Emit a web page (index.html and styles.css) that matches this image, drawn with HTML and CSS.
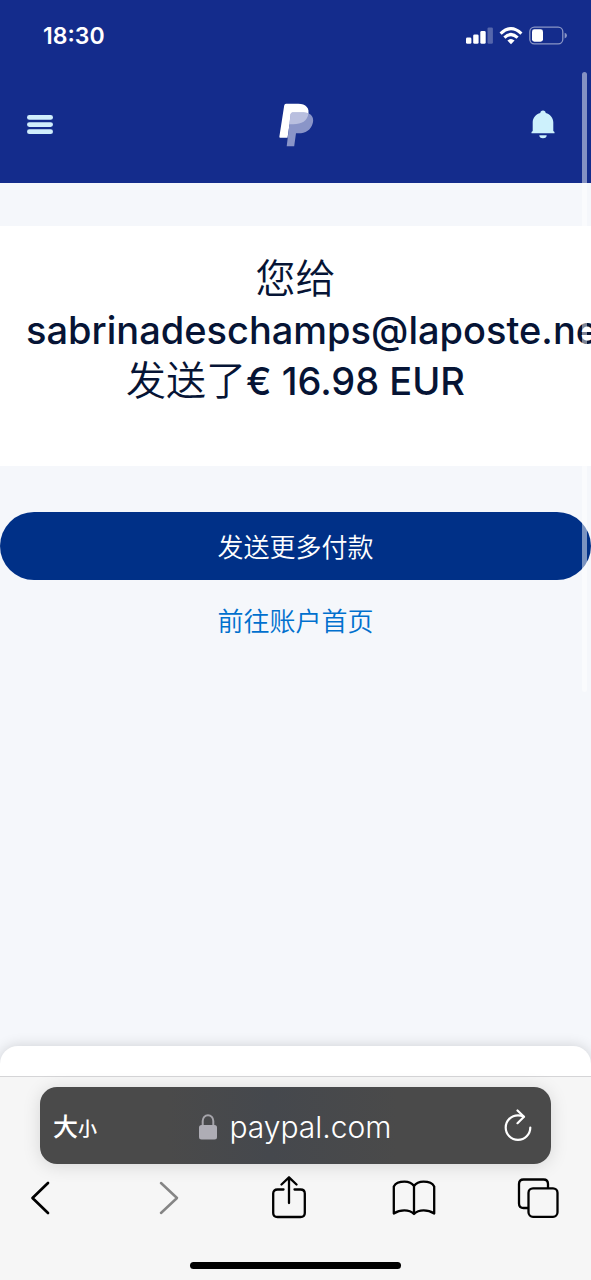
FILE: index.html
```html
<!DOCTYPE html>
<html lang="zh-CN">
<head>
<meta charset="utf-8">
<meta name="viewport" content="width=device-width, initial-scale=1">
<title>PayPal</title>
<link rel="stylesheet" href="styles.css">
</head>
<body>
<div class="screen">
  <header class="header">
    <div class="status">
      <time class="clock">18:30</time>
      <svg class="indicators" width="102" height="20" viewBox="0 0 102 20" aria-hidden="true">
        <g fill="#fff">
          <rect x="0" y="11.500" width="5.400" height="6.300" rx="1.400"/>
          <rect x="7.200" y="8.400" width="5.400" height="9.400" rx="1.400"/>
          <rect x="14.300" y="5" width="5.400" height="12.800" rx="1.400"/>
          <rect x="21.500" y="1.400" width="5.400" height="16.400" rx="1.400" opacity=".28"/>
        </g>
        <g fill="none" stroke="#fff" stroke-width="3.100">
          <path d="M34.600 7.600Q45 -2.400 55.400 7.600"/>
          <path d="M38.400 11.600Q45 5.400 51.600 11.600"/>
        </g>
        <path d="M45 18.200L41.400 14.600Q45 11.600 48.600 14.600Z" fill="#fff"/>
        <rect x="63.800" y="1.200" width="33" height="16.600" rx="4.600" fill="none" stroke="#fff" stroke-width="1.300" opacity=".5"/>
        <rect x="66" y="3.300" width="11" height="12.400" rx="2.400" fill="#fff"/>
        <path d="M98.600 6.800q2.400 .8 2.400 2.800t-2.400 2.800z" fill="#fff" opacity=".5"/>
      </svg>
    </div>
    <nav class="nav">
      <button class="icon-button" type="button" aria-label="菜单">
        <svg width="28" height="20" viewBox="0 0 28 20" fill="#d0eefc">
          <rect x="1" y="0" width="26" height="4.800" rx="2.400"/>
          <rect x="1" y="7.200" width="26" height="4.800" rx="2.400"/>
          <rect x="1" y="14.300" width="26" height="4.800" rx="2.400"/>
        </svg>
      </button>
      <a class="logo" href="#" aria-label="PayPal">
        <svg width="36" height="44" viewBox="0 0 36 44">
          <path d="M8 .8H20.300C27.800 .8 32.300 5.300 30 12.400 27.800 19 22.300 21.200 15.300 21.200H11.600L9.500 34.800H2.200Q1.200 34.800 1.400 33.600L6.200 2.400Q6.500 .8 8 .8Z" fill="#fff"/>
          <path d="M14.600 9.600H25.500C32.500 9.600 36.400 13.800 34.800 20 33 27.100 27.500 30.300 20.500 30.300H18L16.200 43.300H8.700L12.600 11.200Q12.800 9.600 14.600 9.600Z" fill="#8a95c8"/>
          <path d="M14.400 9.600H25.500Q28.600 9.600 30.500 10.300C29.400 18.200 23.600 21.200 15.300 21.200H11.400L12.600 11.200Q12.800 9.600 14.400 9.600Z" fill="#b9bfdf"/>
        </svg>
      </a>
      <button class="icon-button bell" type="button" aria-label="通知">
        <svg width="24" height="30" viewBox="0 0 24 30" fill="#cdf1fc">
          <path d="M12 .5c1.600 0 2.700 1 2.700 2.500 4.400 1.100 7.600 4.800 7.600 9.500v8.400l1.200 1.200v1.200H.5v-1.200l1.200-1.200v-8.400C1.700 7.800 4.900 4.100 9.300 3 9.300 1.500 10.400.5 12 .5Z"/>
          <path d="M8.300 25.200h7.400a3.700 3 0 0 1-7.400 0Z"/>
        </svg>
      </button>
    </nav>
  </header>

  <main class="main">
    <section class="card">
      <h1 class="title"><span class="han">您给</span><br>sabrinadeschamps@laposte.net<br><span class="han">发送了</span>€ 16.98 EUR</h1>
    </section>
    <div class="actions">
      <button class="primary" type="button">发送更多付款</button>
      <a class="link" href="#">前往账户首页</a>
    </div>
    <div class="sheet"></div>
  </main>

  <footer class="toolbar">
    <div class="address">
      <button class="text-size" type="button" aria-label="文字大小">大<span class="small">小</span></button>
      <button class="url" type="button">
        <svg width="18" height="26" viewBox="0 0 18 26" aria-hidden="true">
          <path d="M3.700 12V7a5.300 5.800 0 0 1 10.600 0v5" fill="none" stroke="#a5a4aa" stroke-width="2"/>
          <rect x="0" y="11" width="18" height="14.500" rx="2.500" fill="#aeadb5"/>
        </svg>
        <span>paypal.com</span>
      </button>
      <button class="reload" type="button" aria-label="重新加载">
        <svg width="28" height="34" viewBox="0 0 28 34" fill="none" stroke="#fff" stroke-width="2.200" stroke-linecap="round" stroke-linejoin="round">
          <path d="M19.500 7.500Q17 6.300 14 6.300A12.300 12.300 0 1 0 26.300 18.600"/>
          <path d="M13.500 1.500L20 7.800L13.500 14.200"/>
        </svg>
      </button>
    </div>
    <nav class="tools">
      <button class="tool" type="button" aria-label="后退">
        <svg width="20" height="34" viewBox="0 0 20 34" fill="none" stroke="#000" stroke-width="2.700" stroke-linecap="round" stroke-linejoin="round"><path d="M18 2L2.500 17L18 32"/></svg>
      </button>
      <button class="tool" type="button" aria-label="前进" disabled>
        <svg width="28" height="34" viewBox="0 0 28 34" fill="none" stroke="#858585" stroke-width="2.500" stroke-linecap="round" stroke-linejoin="round"><path d="M10 2L26 17L10 32"/></svg>
      </button>
      <button class="tool" type="button" aria-label="分享">
        <svg width="36" height="44" viewBox="0 0 36 44" fill="none" stroke="#000" stroke-width="2.300" stroke-linecap="round" stroke-linejoin="round">
          <path d="M12.500 13.500H6.500Q2.200 13.500 2.200 17.500V37Q2.200 41 6.500 41H29.500Q33.800 41 33.800 37V17.500Q33.800 13.500 29.500 13.500H23.500"/>
          <path d="M18 27V1.500M10.500 8.500L18 1.300L25.500 8.500"/>
        </svg>
      </button>
      <button class="tool" type="button" aria-label="书签">
        <svg width="44" height="36" viewBox="0 0 44 36" fill="none" stroke="#000" stroke-width="2.300" stroke-linejoin="round">
          <path d="M22 6C20 3.200 16.500 1.700 12.500 1.700C7.500 1.700 3.500 3.200 1.800 6.500V33.500C8 29.500 17 29 22 34C27 29 36 29.500 42.200 33.500V6.500C40.500 3.200 36.500 1.700 31.500 1.700C27.500 1.700 24 3.200 22 6ZM22 6V34"/>
        </svg>
      </button>
      <button class="tool" type="button" aria-label="标签页">
        <svg width="42" height="40" viewBox="0 0 42 40" fill="none" stroke="#000" stroke-width="2.300" stroke-linejoin="round">
          <path d="M11 30H6.500Q2 30 2 25.500V6Q2 1.500 6.500 1.500H26.500Q31 1.500 31 6V10"/>
          <rect x="11.500" y="10.300" width="29" height="28.500" rx="4.500"/>
        </svg>
      </button>
    </nav>
    <div class="home"></div>
  </footer>
  <div class="scrollbar"></div>
</div>
</body>
</html>
```
FILE: styles.css
```css
* {
  box-sizing: border-box;
}

body {
  margin: 0;
  font-family: Inter, "Noto Sans CJK SC", sans-serif;
  background: #f5f7fb;
}

button {
  padding: 0;
  border: 0;
  background: none;
  font: inherit;
  color: inherit;
}

svg {
  display: block;
}

.screen {
  position: relative;
  display: flex;
  flex-direction: column;
  min-height: 100vh;
  overflow: hidden;
}

.header {
  background: #142c8c;
  color: #fff;
}

.status {
  display: flex;
  align-items: center;
  justify-content: space-between;
  height: 72px;
  padding: 0 23px 0 43px;
}

.clock {
  font-size: 23px;
  font-weight: 600;
}

.nav {
  display: grid;
  grid-template-columns: 1fr auto 1fr;
  align-items: center;
  padding: 31px 26px 36px;
}

.bell {
  justify-self: end;
  padding-right: 10px;
}

.main {
  flex: 1;
  display: flex;
  flex-direction: column;
}

.card {
  margin-top: 43px;
  padding: 28px 26px 59px;
  background: #fff;
}

.title {
  margin: 0;
  font-size: 38px;
  line-height: 51px;
  font-weight: 500;
  text-align: center;
  color: #061435;
}

.han {
  font-size: 40px;
  font-weight: 350;
  line-height: 1;
}

.actions {
  display: flex;
  flex-direction: column;
  align-items: center;
  gap: 22px;
  padding-top: 46px;
}

.primary {
  width: 100%;
  height: 68px;
  padding-bottom: 2px;
  border-radius: 34px;
  background: #003087;
  color: #fff;
  font-size: 26px;
  font-weight: 350;
}

.link {
  font-size: 26px;
  font-weight: 350;
  line-height: 40px;
  color: #0070ce;
  text-decoration: none;
}

.sheet {
  height: 30px;
  margin-top: auto;
  border-radius: 18px 18px 0 0;
  background: #fff;
  box-shadow: 0 0 14px rgba(0, 0, 0, 0.16);
}

.toolbar {
  position: relative;
  padding: 10px 0 11px;
  border-top: 1px solid #d5d5d7;
  background: #f6f6f6;
}

.address {
  display: grid;
  grid-template-columns: 1fr auto 1fr;
  align-items: center;
  height: 77px;
  margin: 0 40px;
  padding: 0 13px;
  border-radius: 17px;
  background: linear-gradient(90deg, #4a4a4a 25%, #45484d 45%, #4a4a4a 70%);
  box-shadow: 0 2px 18px rgba(0, 0, 0, 0.13);
  color: #fff;
}

.text-size {
  justify-self: start;
  padding-bottom: 2px;
  font-size: 25px;
  font-weight: 500;
}

.small {
  font-size: 19px;
}

.url {
  display: flex;
  align-items: center;
  gap: 12px;
  padding-top: 2px;
  font-size: 30px;
  font-weight: 300;
}

.reload {
  justify-self: end;
  padding-right: 6px;
}

.tools {
  display: flex;
  align-items: center;
  justify-content: space-between;
  height: 68px;
  padding: 0 31px 0 18px;
}

.tool {
  display: flex;
  justify-content: center;
  width: 44px;
}

.home {
  width: 211px;
  height: 7px;
  margin: 30px auto 0;
  border-radius: 4px;
  background: #000;
}

.scrollbar {
  position: absolute;
  top: 72px;
  right: 4px;
  width: 5px;
  height: 620px;
  border-radius: 3px;
  background: rgba(255, 255, 255, 0.48);
}
```
